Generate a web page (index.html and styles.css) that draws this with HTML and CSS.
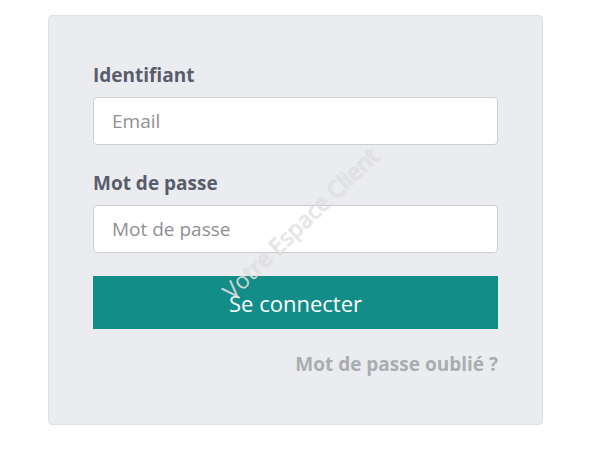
FILE: index.html
```html
<!DOCTYPE html>
<html lang="fr">
<head>
<meta charset="utf-8">
<title>Connexion</title>
<link rel="stylesheet" href="styles.css">
</head>
<body>
<div class="card">
  <form class="form">
    <label class="label" for="email">Identifiant</label>
    <input class="input" id="email" type="text" placeholder="Email">
    <label class="label label-pw" for="pw">Mot de passe</label>
    <input class="input" id="pw" type="password" placeholder="Mot de passe">
    <button class="btn" type="button">Se connecter</button>
    <div class="forgot-row"><a class="forgot" href="#">Mot de passe oublié ?</a></div>
  </form>
  <div class="watermark">Votre Espace Client</div>
</div>
</body>
</html>
```
FILE: styles.css
```css
html, body {
  margin: 0;
  padding: 0;
  background: #ffffff;
  font-family: "Open Sans", "Noto Sans", sans-serif;
}
body {
  padding: 15px 0 0 48px;
}
.card {
  position: relative;
  box-sizing: border-box;
  width: 495px;
  height: 410px;
  background: #ebecf0;
  border: 1px solid #dfe0e4;
  border-radius: 4px;
  padding: 47px 44px 0 44px;
  overflow: hidden;
}
.form {
  display: flex;
  flex-direction: column;
}
.label {
  font-size: 19px;
  line-height: 25px;
  font-weight: 700;
  color: #585d6b;
  margin-bottom: 9px;
}
.label-pw {
  margin-top: 26px;
}
.input {
  box-sizing: border-box;
  height: 48px;
  width: 100%;
  border: 1px solid #cdced2;
  border-radius: 4px;
  background: #ffffff;
  padding: 0 18px;
  font-family: "Open Sans", sans-serif;
  font-size: 19px;
  color: #333;
  outline: none;
}
.input::placeholder {
  color: #8e9094;
}
.btn {
  margin-top: 23px;
  height: 53px;
  width: 100%;
  border: none;
  border-radius: 0;
  background: #138d87;
  color: #ffffff;
  font-family: "Open Sans", sans-serif;
  font-size: 22px;
  cursor: pointer;
}
.forgot-row {
  display: flex;
  justify-content: flex-end;
  margin-top: 23px;
}
.forgot {
  font-size: 19px;
  line-height: 25px;
  font-weight: 700;
  color: #a9adb0;
  text-decoration: none;
}
.watermark {
  position: absolute;
  left: 50%;
  top: 50%;
  transform: translate(-50%, -50%) translate(4px, 3px) rotate(-44deg);
  font-size: 23px;
  color: rgba(255, 255, 255, 0.7);
  text-shadow: 0 0 1px rgba(120, 120, 120, 0.6);
  white-space: nowrap;
  pointer-events: none;
}
```
